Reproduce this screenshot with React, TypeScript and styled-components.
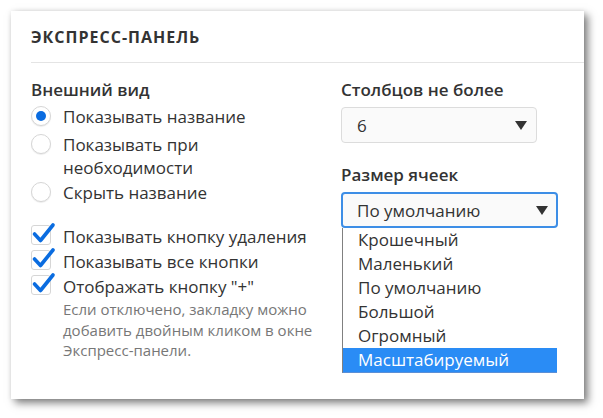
import React from "react";
import styled, {createGlobalStyle} from "styled-components";

const GlobalStyle = createGlobalStyle`
html, body {
  margin: 0;
  background: #fff;
}
body {
  font-family: "Open Sans", "Noto Sans", sans-serif;
  color: #333;
}
`

const Page = styled.div`
box-sizing: border-box;
width: 603px;
height: 418px;
padding: 11px 0 0 11px;
overflow: hidden;
`

const Panel = styled.div`
width: 573px;
height: 388px;
background: #fff;
box-shadow: 4px 4px 8px rgba(0, 0, 0, 0.5), 0 0 5px rgba(0, 0, 0, 0.08);
`

const Header = styled.div`
margin-left: 20px;
padding-top: 15px;
height: 36px;
border-bottom: 1px solid #e4e4e4;
`

const Title = styled.h2`
margin: 0;
font-size: 16px;
font-weight: 700;
letter-spacing: 1px;
line-height: 22px;
color: #333;
`

const Body = styled.div`
display: grid;
grid-template-columns: 310px 1fr;
padding: 15px 0 0 20px;
`

const Column = styled.div`
display: flex;
flex-direction: column;
`

const Label = styled.div<{ $top?: number }>`
font-size: 17px;
font-weight: 600;
line-height: 24px;
margin-top: ${p => p.$top ?? 0}px;
margin-bottom: 3px;
`

const Option = styled.label<{ $gap?: number }>`
display: flex;
align-items: flex-start;
gap: 12px;
font-size: 17px;
line-height: 23px;
margin-top: ${p => p.$gap ?? 0}px;
`

const Radio = styled.span<{ $checked?: boolean }>`
flex: none;
box-sizing: border-box;
width: 20px;
height: 20px;
margin-top: 1px;
border-radius: 50%;
border: 1px solid #d6d6d6;
background: #fff;
box-shadow: 0 1px 1px rgba(0, 0, 0, 0.08);
display: flex;
align-items: center;
justify-content: center;

&::after {
  content: "";
  display: ${p => p.$checked ? "block" : "none"};
  width: 10px;
  height: 10px;
  border-radius: 50%;
  background: #0a6ce0;
}
`

const Box = styled.span`
flex: none;
box-sizing: border-box;
position: relative;
width: 20px;
height: 20px;
border: 1px solid #d6d6d6;
border-radius: 3px;
background: #fff;

svg {
  position: absolute;
  left: -1px;
  top: -4px;
}
`

const Hint = styled.div`
margin: 1px 0 0 32px;
font-size: 15px;
line-height: 20.5px;
color: #777;
`

const SelectWrap = styled.div`
position: relative;
`

const Select = styled.div<{ $width: number, $focused?: boolean }>`
box-sizing: border-box;
width: ${p => p.$width}px;
height: 36px;
margin-top: 2px;
display: flex;
align-items: center;
justify-content: space-between;
padding: 0 ${p => p.$focused ? 8 : 9}px 0 ${p => p.$focused ? 14 : 15}px;
font-size: 17px;
background: #fafafa;
border: ${p => p.$focused ? "2px solid #3d8ee6" : "1px solid #dcdcdc"};
border-radius: 4px;
`

const Arrow = styled.span`
width: 0;
height: 0;
border-left: 6px solid transparent;
border-right: 6px solid transparent;
border-top: 9px solid #333;
`

// dropdown menu opened under the focused select
const List = styled.ul`
position: absolute;
left: 1px;
top: 38px;
width: 214px;
margin: 0;
padding: 0;
list-style: none;
background: #fff;
border-left: 1px solid #808080;
border-bottom: 1px solid #5b8fd6;
`

const Item = styled.li<{ $active?: boolean }>`
height: 24px;
line-height: 24px;
padding-left: 15px;
font-size: 17px;
color: ${p => p.$active ? "#fff" : "#333"};
background: ${p => p.$active ? "#2a8cf5" : "transparent"};
`

const Check = () => (
    <svg width="26" height="24" viewBox="0 0 26 24">
        <path d="M3.5 12 L9.5 18.5 L22 3" fill="none" stroke="#0a6ce0" strokeWidth="3.6"
              strokeLinecap="round" strokeLinejoin="round"/>
    </svg>
)

const sizes = ["Крошечный", "Маленький", "По умолчанию", "Большой", "Огромный", "Масштабируемый"]

function App() {
    return (
        <Page>
            <GlobalStyle/>
            <Panel>
                <Header>
                    <Title>ЭКСПРЕСС-ПАНЕЛЬ</Title>
                </Header>
                <Body>
                    <Column>
                        <Label>Внешний вид</Label>
                        <Option><Radio $checked/>Показывать название</Option>
                        <Option $gap={5}><Radio/>Показывать при<br/>необходимости</Option>
                        <Option $gap={2}><Radio/>Скрыть название</Option>
                        <Option $gap={21}><Box><Check/></Box>Показывать кнопку удаления</Option>
                        <Option $gap={2}><Box><Check/></Box>Показывать все кнопки</Option>
                        <Option $gap={2}><Box><Check/></Box>Отображать кнопку "+"</Option>
                        <Hint>
                            Если отключено, закладку можно<br/>
                            добавить двойным кликом в окне<br/>
                            Экспресс-панели.
                        </Hint>
                    </Column>
                    <Column>
                        <Label>Столбцов не более</Label>
                        <Select $width={196}>6<Arrow/></Select>
                        <Label $top={20}>Размер ячеек</Label>
                        <SelectWrap>
                            <Select $width={217} $focused>По умолчанию<Arrow/></Select>
                            <List>
                                {sizes.map(s => (
                                    <Item key={s} $active={s === "Масштабируемый"}>{s}</Item>
                                ))}
                            </List>
                        </SelectWrap>
                    </Column>
                </Body>
            </Panel>
        </Page>
    )
}

export default App
